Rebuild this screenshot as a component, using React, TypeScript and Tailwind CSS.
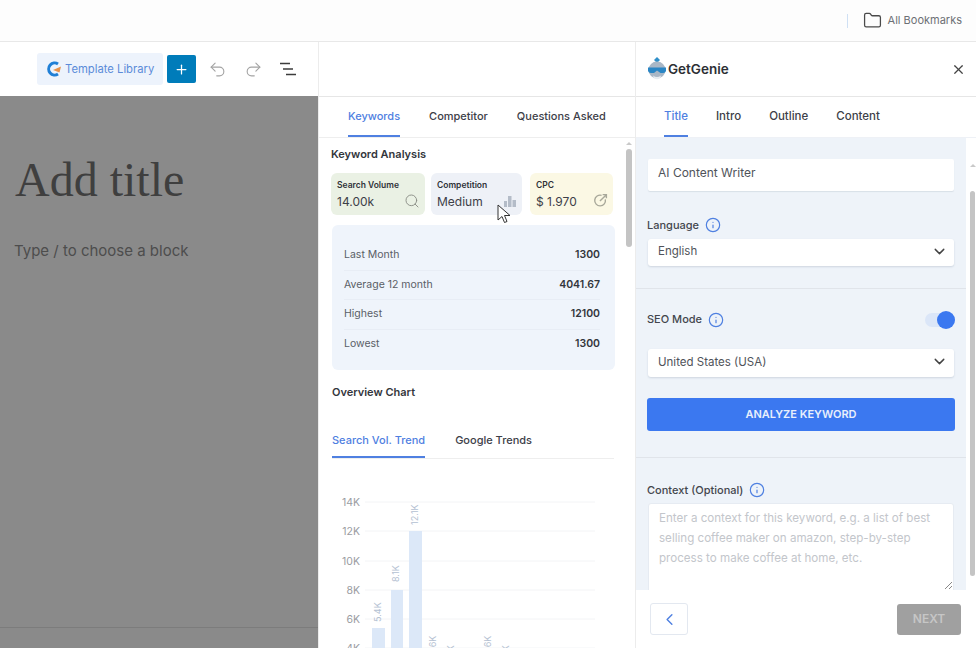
import { ChevronDown, ChevronLeft, Folder, Info, Plus, Redo2, Search, Undo2, X } from 'lucide-react';

const font = { fontFamily: 'Inter, "Noto Sans", sans-serif' };

function GenieLogo() {
  return (
    <svg width="18" height="24" viewBox="0 0 18 24" className="shrink-0">
      <path d="M9 0l3 3-2 2H8L6 3z" fill="#2f8fc9" />
      <circle cx="9" cy="13" r="8.500" fill="#a9b7c6" />
      <path d="M0 10.500h18v3.500a3 3 0 0 1-3 2h-2.500L9 13.500 6 16H3a3 3 0 0 1-3-2z" fill="#2a86c5" />
      <path d="M5 18.500q4 3 8 0l-1 3q-3 1.500-6 0z" fill="#e8edf2" />
    </svg>
  );
}

function TemplateLogo() {
  return (
    <svg width="14" height="16" viewBox="0 0 14 16" className="shrink-0">
      <path d="M11 3A6 6 0 1 0 11 13" fill="none" stroke="#1f7fd6" strokeWidth="3" />
      <path d="M6 9l8-3.500-1.500 6z" fill="#e8924a" />
    </svg>
  );
}

function ListIcon() {
  return (
    <svg width="18" height="14" viewBox="0 0 18 14">
      <path d="M0 1.500h10M3 7h10M6 12.500h10" stroke="#3c3c3c" strokeWidth="1.700" fill="none" />
    </svg>
  );
}

function Tab({ label, active, size = 'text-[11px]' }: { label: string; active?: boolean; size?: string }) {
  return (
    <div className={`h-full flex items-center ${size} font-medium border-b-2 pt-[1px] ${active ? 'text-[#4f80e1] border-[#4f80e1]' : 'text-[#3d4048] border-transparent'}`}>
      {label}
    </div>
  );
}

function StatCard({ label, value, bg, width, children }: { label: string; value: string; bg: string; width: string; children: React.ReactNode }) {
  return (
    <div className={`${bg} ${width} h-[42px] rounded-md pl-[6px] pr-[5px] pt-[6px] flex flex-col gap-[3px]`}>
      <div className="text-[8.500px] leading-[12px] font-semibold text-[#2f3238]">{label}</div>
      <div className="flex items-center justify-between">
        <span className="text-xs leading-[16px] text-[#3d4048]">{value}</span>
        <span className="-mt-[3px] flex">{children}</span>
      </div>
    </div>
  );
}

function StatRow({ label, value, last }: { label: string; value: string; last?: boolean }) {
  return (
    <div className={`h-[29.500px] flex items-center justify-between text-[10.500px] ${last ? '' : 'border-b border-[#e8edf5]'}`}>
      <span className="text-[#5a5e66]">{label}</span>
      <span className="font-semibold text-[#33363c]">{value}</span>
    </div>
  );
}

function Label({ text }: { text: string }) {
  return (
    <div className="flex items-center gap-[6px] text-[11px] font-medium text-[#43464d]">
      {text}
      <Info size={16} strokeWidth={1.8} className="text-[#4f80e1]" />
    </div>
  );
}

function SelectBox({ value, height }: { value: string; height: string }) {
  return (
    <div className={`${height} w-[306px] ml-[1px] bg-white rounded-[3px] shadow-[0_1px_2px_rgba(60,80,110,0.18)] flex items-center justify-between pl-[10px] pr-[6px] text-[11.500px] text-[#50535a]`}>
      {value}
      <ChevronDown size={17} strokeWidth={2} className="text-[#444] -mt-[2px]" />
    </div>
  );
}

function ScrollArrow() {
  return <div className="w-0 h-0 border-x-[3px] border-x-transparent border-b-[3px] border-b-[#c9c9c9]" />;
}

function Chart() {
  const ticks = [
    { label: '14K', y: 33 },
    { label: '12K', y: 62 },
    { label: '10K', y: 92 },
    { label: '8K', y: 121 },
    { label: '6K', y: 150 },
    { label: '4K', y: 179 },
  ];
  const notes = [
    { x: 62, y: 153, t: '5.4K' },
    { x: 80, y: 113, t: '8.1K' },
    { x: 99, y: 56, t: '12.1K' },
    { x: 117, y: 186, t: '3.6K' },
    { x: 135, y: 186, t: '1K' },
    { x: 172, y: 186, t: '3.6K' },
    { x: 190, y: 186, t: '1K' },
  ];
  return (
    <svg width="292" height="181" viewBox="0 0 292 181" className="mt-[10px] -ml-[12px] block" style={font}>
      {ticks.map((t) => (
        <g key={t.label}>
          <line x1="46" x2="276" y1={t.y} y2={t.y} stroke="#f3f4f6" />
          <text x="41" y={t.y + 3.500} textAnchor="end" fontSize="10.500" fill="#9a9ca1">{t.label}</text>
        </g>
      ))}
      <rect x="53" y="159" width="13" height="22" fill="#dce8f8" />
      <rect x="72" y="121" width="12" height="60" fill="#dce8f8" />
      <rect x="90" y="62" width="13" height="119" fill="#dce8f8" />
      {notes.map((n) => (
        <text key={n.x} transform={`translate(${n.x} ${n.y}) rotate(-90)`} fontSize="9" fill="#b4c1d2">{n.t}</text>
      ))}
    </svg>
  );
}

export default function App() {
  return (
    <div className="relative w-[976px] h-[648px] overflow-hidden flex flex-col bg-white" style={font}>
      {/* Top bar */}
      <div className="h-[42px] shrink-0 bg-[#fdfdfd] border-b border-[#e8e8e8] flex items-center justify-end pr-[14px]">
        <div className="w-[1px] h-[14px] bg-[#cfe0f4] mr-[15px]" />
        <Folder size={19} strokeWidth={1.6} className="text-[#4a4a4a] mr-[6px]" />
        <span className="text-[11px] text-[#6d7075]">All Bookmarks</span>
      </div>

      <div className="flex flex-1 min-h-0">
        {/* Editor */}
        <div className="w-[318px] shrink-0 flex flex-col">
          <div className="h-[54px] shrink-0 bg-white flex items-center pl-[37px]">
            <div className="w-[126px] h-[32px] bg-[#edf3fc] rounded-[3px] flex items-center gap-[4px] pl-[10px] text-[11.250px] text-[#5b8bd9]">
              <TemplateLogo />
              Template Library
            </div>
            <div className="w-[29px] h-[28px] ml-[4px] bg-[#007cba] rounded-[2px] flex items-center justify-center">
              <Plus size={15} strokeWidth={2} className="text-white" />
            </div>
            <Undo2 size={19} strokeWidth={1.4} className="text-[#a3a3a3] ml-[12px]" />
            <Redo2 size={19} strokeWidth={1.4} className="text-[#a3a3a3] ml-[17px]" />
            <div className="ml-[17px] flex"><ListIcon /></div>
          </div>
          <div className="flex-1 bg-[#8a8a8a] flex flex-col pl-[15px]">
            <div className="mt-[53px] text-[48px] leading-[62px] text-[#3f3f3f]" style={{ fontFamily: '"Liberation Serif", serif' }}>Add title</div>
            <div className="mt-[30px] -ml-[1px] text-[15px] leading-[20px] text-[#4d4d4d]">Type / to choose a block</div>
            <div className="mt-auto mb-[20px] -ml-[15px] h-[1px] bg-[#7c7c7c]" />
          </div>
        </div>

        {/* Keyword panel */}
        <div className="w-[318px] shrink-0 flex flex-col border-l border-r border-[#ececec]">
          <div className="h-[55px] shrink-0 border-b border-[#e6e6e6]" />
          <div className="h-[41px] shrink-0 border-b border-[#eeeeee] flex gap-[29px] pl-[29px]">
            <Tab label="Keywords" active />
            <Tab label="Competitor" />
            <Tab label="Questions Asked" />
          </div>
          <div className="flex flex-1 min-h-0 overflow-hidden">
            <div className="w-[295px] shrink-0 pl-[12px] pt-[8px]">
              <div className="text-[11px] leading-[16px] font-semibold text-[#33363c]">Keyword Analysis</div>
              <div className="flex mt-[11px]">
                <StatCard label="Search Volume" value="14.00k" bg="bg-[#eaf1e4]" width="w-[94px]">
                  <Search size={16} strokeWidth={1.4} className="text-[#8a8d85]" />
                </StatCard>
                <div className="w-[6px]" />
                <StatCard label="Competition" value="Medium" bg="bg-[#eef1f7]" width="w-[91px]">
                  <svg width="14" height="14" viewBox="0 0 14 14"><path d="M1 13V7h3v6zM5 13V2h3.500v11zM9.500 13V6H13v7z" fill="#b4bcc8" /></svg>
                </StatCard>
                <div className="w-[8px]" />
                <StatCard label="CPC" value="$ 1.970" bg="bg-[#fbf8e4]" width="w-[83px]">
                  <svg width="15" height="15" viewBox="0 0 14 14" fill="none" stroke="#a8a89a" strokeWidth="1.300"><path d="M11.500 6a5 5 0 1 1-3.500-3.800" /><path d="M6.500 7.500L12 2M9 1.500h3.500V5" /></svg>
                </StatCard>
              </div>
              <div className="mt-[10px] ml-[1px] w-[283px] h-[145px] bg-[#eff4fb] rounded-md pl-[12px] pr-[15px] pt-[16px]">
                <StatRow label="Last Month" value="1300" />
                <StatRow label="Average 12 month" value="4041.67" />
                <StatRow label="Highest" value="12100" />
                <StatRow label="Lowest" value="1300" last />
              </div>
              <div className="mt-[14px] ml-[1px] text-[11px] leading-[16px] font-semibold text-[#33363c]">Overview Chart</div>
              <div className="mt-[24px] h-[35px] ml-[1px] border-b border-[#eeeeee] flex gap-[30px]">
                <Tab label="Search Vol. Trend" active />
                <Tab label="Google Trends" />
              </div>
              <Chart />
            </div>
            <div className="flex-1 pl-[12px] pt-[4px]">
              <div className="w-[6px] flex justify-center mb-[4px]"><ScrollArrow /></div>
              <div className="w-[6px] h-[98px] rounded-full bg-[#c4c4c4]" />
            </div>
          </div>
        </div>

        {/* GetGenie panel */}
        <div className="flex-1 flex flex-col min-w-0">
          <div className="h-[55px] shrink-0 border-b border-[#e6e6e6] flex items-center justify-between pl-[12px] pr-[10px]">
            <div className="flex items-center gap-[2px] text-[13.500px] font-semibold text-[#2d2f34]">
              <GenieLogo />
              GetGenie
            </div>
            <X size={15} strokeWidth={1.9} className="text-[#444]" />
          </div>
          <div className="h-[41px] shrink-0 flex gap-[28px] pl-[28px] bg-white border-b border-[#eef1f6]">
            <Tab label="Title" active size="text-[11.500px]" />
            <Tab label="Intro" size="text-[11.500px]" />
            <Tab label="Outline" size="text-[11.500px]" />
            <Tab label="Content" size="text-[11.500px]" />
          </div>
          <div className="flex-1 min-h-0 flex overflow-hidden">
            <div className="w-[330px] shrink-0 bg-[#eef3f9] pl-[11px] pt-[21px]">
              <div className="h-[32px] w-[306px] ml-[1px] pb-[5px] bg-white rounded-[2px] shadow-[0_1px_1px_rgba(60,80,110,0.12)] flex items-center pl-[10px] text-xs text-[#50535a]">AI Content Writer</div>
              <div className="mt-[26px] mb-[5px]"><Label text="Language" /></div>
              <SelectBox value="English" height="h-[27px]" />
              <div className="h-[1px] -ml-[11px] mt-[22px] bg-[#e0e4ea]" />
              <div className="mt-[22px] flex items-center justify-between w-[308px]">
                <Label text="SEO Mode" />
                <div className="relative w-[30px] h-[18px] flex items-center">
                  <div className="w-[30px] h-[14px] rounded-full bg-[#dbe6f8]" />
                  <div className="absolute right-0 w-[18px] h-[18px] rounded-full bg-[#3b78f0]" />
                </div>
              </div>
              <div className="mt-[20px]"><SelectBox value="United States (USA)" height="h-[28px]" /></div>
              <div className="mt-[21px] h-[33px] w-[308px] rounded-[3px] bg-[#3b78f0] flex items-center justify-center text-[11px] font-semibold text-[#e8effc]">ANALYZE KEYWORD</div>
              <div className="h-[1px] -ml-[11px] mt-[26px] bg-[#e0e4ea]" />
              <div className="mt-[24px] mb-[5px]"><Label text="Context (Optional)" /></div>
              <div className="relative h-[88px] w-[306px] ml-[1px] bg-white rounded-t-[3px] border border-[#e6ebf2] pl-[10px] pr-[8px] pt-[4px] text-[11.600px] leading-[20px] text-[#c3c6cb]">
                Enter a context for this keyword, e.g. a list of best selling coffee maker on amazon, step-by-step process to make coffee at home, etc.
                <svg width="8" height="8" viewBox="0 0 8 8" className="absolute right-[1px] bottom-[1px]"><path d="M1 8l7-7M5 8l3-3" stroke="#888" /></svg>
              </div>
            </div>
            <div className="flex-1 bg-white flex flex-col pl-[4px] pt-[26px]">
              <div className="w-[5px] flex justify-center"><ScrollArrow /></div>
              <div className="w-[5px] h-[385px] mt-[24px] rounded-full bg-[#c4c4c4]" />
            </div>
          </div>
          <div className="h-[58px] shrink-0 bg-white flex items-center justify-between pl-[14px] pr-[15px]">
            <div className="w-[38px] h-[32px] rounded-[3px] border border-[#e3e8f0] flex items-center justify-center">
              <ChevronLeft size={19} strokeWidth={1.8} className="text-[#4f80e1]" />
            </div>
            <div className="w-[64px] h-[31px] rounded-[3px] bg-[#a0a0a0] flex items-center justify-center text-xs font-semibold text-[#c6c6c6]">NEXT</div>
          </div>
        </div>
      </div>

      {/* Mouse pointer */}
      <svg width="15" height="20" viewBox="0 0 15 20" className="absolute left-[497px] top-[204px]">
        <path d="M1 1v15l4-3.500 2.500 6 2.500-1-2.500-6H13z" fill="#fff" stroke="#333" strokeWidth="1" />
      </svg>
    </div>
  );
}
